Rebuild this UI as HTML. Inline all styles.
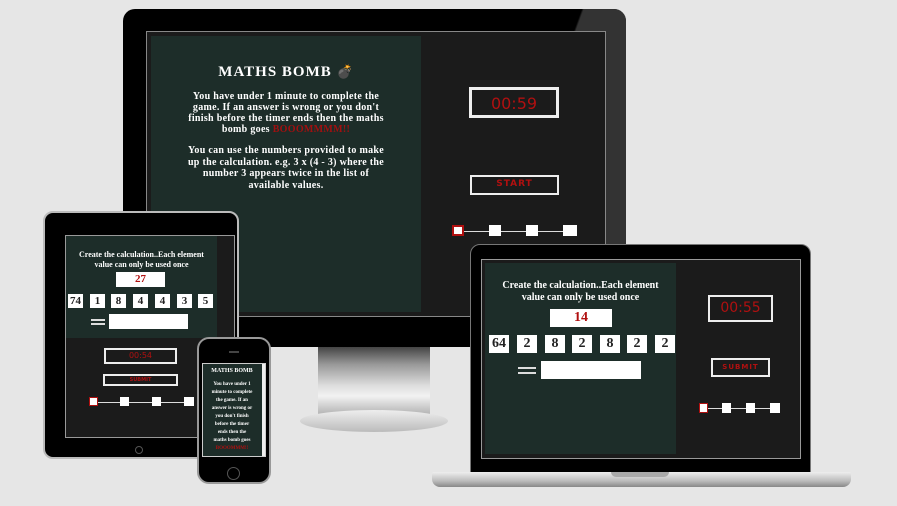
<!DOCTYPE html><html><head><style>
*{margin:0;padding:0;box-sizing:border-box}
body{width:897px;height:506px;background:#e6e6e6;position:relative;overflow:hidden;font-family:"Liberation Serif",serif}
.a{position:absolute}
.g{background:#1d2d29}
.d{background:#1b1b1b}
.t{color:#fff;font-weight:bold;text-align:center;white-space:nowrap}
.bx{position:absolute;background:#fff;color:#222;font-weight:bold;text-align:center;font-family:"Liberation Serif",serif}
.ob{position:absolute;border:2px solid #eee;color:#b01010;text-align:center;font-family:"DejaVu Sans",sans-serif}
.sq{position:absolute;background:#fff;width:12px;height:11px}
.ln{position:absolute;background:#ddd;height:1px}
</style></head><body>
<!-- monitor -->
<div class="a" style="left:123px;top:9px;width:503px;height:338px;background:#000;border-radius:12px 12px 0 0"></div>
<div class="a" style="left:540px;top:9px;width:86px;height:338px;background:linear-gradient(110deg,transparent 20%,#333 21%);border-radius:0 12px 0 0"></div>
<div class="a" style="left:146px;top:31px;width:460px;height:286px;border:1px solid #888;background:#1b1b1b"></div>
<div class="a g" style="left:151px;top:36px;width:270px;height:276px"></div>
<div class="a" style="left:318px;top:347px;width:112px;height:70px;background:linear-gradient(#444,#999 25%,#ddd 55%,#f2f2f2 70%,#aaa)"></div>
<div class="a" style="left:300px;top:410px;width:148px;height:22px;border-radius:50%;background:linear-gradient(#eee,#bbb)"></div>
<div class="a t" style="left:151px;top:64px;width:270px;font-size:15px;letter-spacing:1px">MATHS BOMB <span style="font-size:13px">💣</span></div>
<div class="a t" style="left:151px;top:91px;width:270px;font-size:10px;line-height:11px;letter-spacing:0.3px">You have under 1 minute to complete the<br>game. If an answer is wrong or you don't<br>finish before the timer ends then the maths<br>bomb goes <span style="color:#a01010">BOOOMMMM!!</span></div>
<div class="a t" style="left:151px;top:145px;width:270px;font-size:10px;line-height:11.5px;letter-spacing:0.3px">You can use the numbers provided to make<br>up the calculation. e.g. 3 x (4 - 3) where the<br>number 3 appears twice in the list of<br>available values.</div>
<div class="ob" style="left:469px;top:87px;width:90px;height:31px;font-size:16px;line-height:27px;border-width:3px">00:59</div>
<div class="ob" style="left:470px;top:175px;width:89px;height:20px;font-size:9px;line-height:15px;font-weight:bold;letter-spacing:1px;border-width:2px">START</div>
<div class="ln" style="left:460px;top:231px;width:110px"></div>
<div class="sq" style="left:452px;top:225px;border:2px solid #b01010"></div>
<div class="sq" style="left:489px;top:225px"></div><div class="sq" style="left:526px;top:225px"></div><div class="sq" style="left:563px;top:225px;width:14px"></div>
<!-- tablet -->
<div class="a" style="left:43px;top:211px;width:196px;height:248px;background:#000;border-radius:10px;border:2px solid #bbb"></div>
<div class="a" style="left:65px;top:235px;width:170px;height:203px;background:#1b1b1b;border:1px solid #999"></div>
<div class="a g" style="left:66px;top:236px;width:151px;height:102px"></div>
<div class="a t" style="left:66px;top:250px;width:151px;font-size:8px;line-height:10px">Create the calculation..Each element<br>value can only be used once</div>
<div class="bx" style="left:116px;top:272px;width:49px;height:15px;font-size:11px;line-height:15px;color:#b01010">27</div>
<div class="bx" style="left:68px;top:294px;width:15px;height:14px;font-size:11px;line-height:14px">74</div>
<div class="bx" style="left:90px;top:294px;width:15px;height:14px;font-size:11px;line-height:14px">1</div>
<div class="bx" style="left:111px;top:294px;width:15px;height:14px;font-size:11px;line-height:14px">8</div>
<div class="bx" style="left:133px;top:294px;width:15px;height:14px;font-size:11px;line-height:14px">4</div>
<div class="bx" style="left:155px;top:294px;width:15px;height:14px;font-size:11px;line-height:14px">4</div>
<div class="bx" style="left:177px;top:294px;width:15px;height:14px;font-size:11px;line-height:14px">3</div>
<div class="bx" style="left:198px;top:294px;width:15px;height:14px;font-size:11px;line-height:14px">5</div>
<div class="a" style="left:91px;top:319px;width:14px;height:2px;background:#ddd;box-shadow:0 4px 0 #ddd"></div>
<div class="bx" style="left:109px;top:314px;width:79px;height:15px"></div>
<div class="ob" style="left:104px;top:348px;width:73px;height:16px;font-size:8px;line-height:12px">00:54</div>
<div class="ob" style="left:103px;top:374px;width:75px;height:12px;font-size:5px;line-height:8px;font-weight:bold">SUBMIT</div>
<div class="ln" style="left:94px;top:402px;width:96px"></div>
<div class="sq" style="left:89px;top:397px;width:9px;height:9px;border:1px solid #b01010"></div>
<div class="sq" style="left:120px;top:397px;width:9px;height:9px"></div><div class="sq" style="left:152px;top:397px;width:9px;height:9px"></div><div class="sq" style="left:184px;top:397px;width:10px;height:9px"></div>
<div class="a" style="left:135px;top:446px;width:8px;height:8px;border:1px solid #555;border-radius:50%"></div>
<!-- phone -->
<div class="a" style="left:197px;top:337px;width:74px;height:147px;background:#000;border-radius:12px;border:2px solid #999"></div>
<div class="a g" style="left:202px;top:363px;width:64px;height:94px;border:1px solid #ccc"></div>
<div class="a" style="left:262px;top:364px;width:3px;height:92px;background:#eee"></div>
<div class="a t" style="left:203px;top:368px;width:58px;font-size:6px">MATHS BOMB</div>
<div class="a t" style="left:203px;top:381px;width:58px;font-size:5px;line-height:8px">You have under 1<br>minute to complete<br>the game. If an<br>answer is wrong or<br>you don't finish<br>before the timer<br>ends then the<br>maths bomb goes<br><span style="color:#b01010">BOOOMMM!!</span></div>
<div class="a" style="left:227px;top:467px;width:13px;height:13px;border:1px solid #555;border-radius:50%"></div>
<div class="a" style="left:229px;top:351px;width:10px;height:2px;background:#444"></div>
<!-- laptop -->
<div class="a" style="left:470px;top:244px;width:341px;height:230px;background:#000;border-radius:10px 10px 0 0;border:1px solid #777"></div>
<div class="a" style="left:481px;top:259px;width:320px;height:200px;background:#1b1b1b;border:1px solid #999"></div>
<div class="a g" style="left:485px;top:263px;width:191px;height:191px"></div>
<div class="a" style="left:432px;top:472px;width:419px;height:15px;border-radius:2px 2px 8px 8px;background:linear-gradient(#eee,#bbb 60%,#888)"></div>
<div class="a" style="left:611px;top:472px;width:58px;height:5px;background:#aaa;border-radius:0 0 5px 5px"></div>
<div class="a t" style="left:485px;top:280px;width:191px;font-size:10px;line-height:12px">Create the calculation..Each element<br>value can only be used once</div>
<div class="bx" style="left:550px;top:309px;width:62px;height:18px;font-size:14px;line-height:18px;color:#b01010">14</div>
<div class="bx" style="left:489px;top:335px;width:20px;height:18px;font-size:14px;line-height:18px">64</div>
<div class="bx" style="left:517px;top:335px;width:20px;height:18px;font-size:14px;line-height:18px">2</div>
<div class="bx" style="left:545px;top:335px;width:20px;height:18px;font-size:14px;line-height:18px">8</div>
<div class="bx" style="left:572px;top:335px;width:20px;height:18px;font-size:14px;line-height:18px">2</div>
<div class="bx" style="left:600px;top:335px;width:20px;height:18px;font-size:14px;line-height:18px">8</div>
<div class="bx" style="left:627px;top:335px;width:20px;height:18px;font-size:14px;line-height:18px">2</div>
<div class="bx" style="left:655px;top:335px;width:20px;height:18px;font-size:14px;line-height:18px">2</div>
<div class="a" style="left:518px;top:367px;width:18px;height:2px;background:#ddd;box-shadow:0 5px 0 #ddd"></div>
<div class="bx" style="left:541px;top:361px;width:100px;height:18px"></div>
<div class="ob" style="left:708px;top:295px;width:65px;height:27px;font-size:14px;line-height:23px">00:55</div>
<div class="ob" style="left:711px;top:358px;width:59px;height:19px;font-size:7px;line-height:15px;font-weight:bold;letter-spacing:1px">SUBMIT</div>
<div class="ln" style="left:708px;top:408px;width:68px"></div>
<div class="sq" style="left:699px;top:403px;width:9px;height:10px;border:1px solid #b01010"></div>
<div class="sq" style="left:722px;top:403px;width:9px;height:10px"></div><div class="sq" style="left:746px;top:403px;width:9px;height:10px"></div><div class="sq" style="left:770px;top:403px;width:10px;height:10px"></div>
</body></html>
